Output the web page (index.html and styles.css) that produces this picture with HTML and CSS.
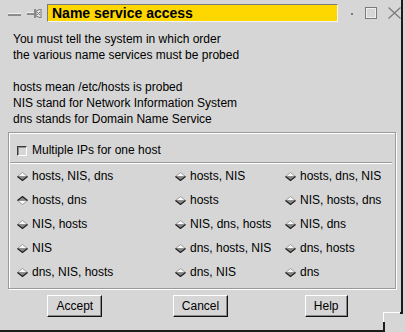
FILE: index.html
```html
<!DOCTYPE html>
<html lang="en">

<head>
  <meta charset="UTF-8">
  <title>Name service access</title>
  <link rel="stylesheet" href="styles.css">
</head>

<body>
  <svg class="defs" width="0" height="0">
    <symbol id="radio-off" viewBox="0 0 11 9">
      <path d="M0.5 4.5 L5.5 0.5 L10.5 4.5 Z" fill="#fafafa" stroke="#9a9a9a" stroke-width="1" stroke-linejoin="round" />
      <path d="M0.5 4.5 L5.5 8.5 L10.5 4.5 Z" fill="#8a8a8a" />
      <path d="M0.5 4.5 L5.5 8.5 L10.5 4.5" fill="none" stroke="#1e1e1e" stroke-width="1.2" />
    </symbol>
    <symbol id="radio-on" viewBox="0 0 11 9">
      <path d="M0.5 4.5 L5.5 8.5 L10.5 4.5 Z" fill="#fafafa" stroke="#9a9a9a" stroke-width="1" stroke-linejoin="round" />
      <path d="M0.5 4.5 L5.5 0.5 L10.5 4.5 Z" fill="#8a8a8a" />
      <path d="M0.5 4.5 L5.5 0.5 L10.5 4.5" fill="none" stroke="#1e1e1e" stroke-width="1.2" />
    </symbol>
  </svg>

  <div class="window">
    <div class="titlebar">
      <svg class="tb-min" width="13" height="3" viewBox="0 0 13 3">
        <rect x="0" y="0" width="13" height="1" fill="#f2f2f2" />
        <rect x="0" y="1" width="13" height="2" fill="#8c8c8c" />
      </svg>
      <svg class="tb-pin" width="15" height="9" viewBox="0 0 15 9">
        <rect x="0" y="3" width="7" height="1" fill="#f2f2f2" />
        <rect x="0" y="4" width="7" height="2" fill="#8c8c8c" />
        <rect x="7" y="0" width="2" height="9" fill="#8c8c8c" />
        <path d="M9 2 L14 0 L14 9 L9 7 Z" fill="#e6e6e6" stroke="#777" stroke-width="1" />
        <path d="M10 3 L13 6 M13 3 L10 6" stroke="#777" stroke-width="1" />
      </svg>
      <div class="title">Name service access</div>
      <span class="tb-dot"></span>
      <svg class="tb-max" width="12" height="12" viewBox="0 0 12 12">
        <rect x="0.5" y="0.5" width="11" height="11" fill="none" stroke="#7a7a7a" />
        <rect x="1.5" y="1.5" width="9" height="9" fill="none" stroke="#f0f0f0" />
      </svg>
      <svg class="tb-close" width="13" height="12" viewBox="0 0 13 12">
        <path d="M0.5 0.5 L12.5 11.5 M12.5 0.5 L0.5 11.5" stroke="#7a7a7a" stroke-width="1.2" />
      </svg>
    </div>

    <p class="intro">
      You must tell the system in which order<br>
      the various name services must be probed<br>
      <br>
      hosts mean /etc/hosts is probed<br>
      NIS stand for Network Information System<br>
      dns stands for Domain Name Service
    </p>

    <div class="frame">
      <div class="check-row">
        <span class="checkbox"></span>
        <span>Multiple IPs for one host</span>
      </div>
      <div class="separator"></div>
      <div class="choices">
        <div class="choice"><svg class="radio"><use href="#radio-off" /></svg>hosts, NIS, dns</div>
        <div class="choice"><svg class="radio"><use href="#radio-off" /></svg>hosts, NIS</div>
        <div class="choice"><svg class="radio"><use href="#radio-off" /></svg>hosts, dns, NIS</div>
        <div class="choice"><svg class="radio"><use href="#radio-on" /></svg>hosts, dns</div>
        <div class="choice"><svg class="radio"><use href="#radio-off" /></svg>hosts</div>
        <div class="choice"><svg class="radio"><use href="#radio-off" /></svg>NIS, hosts, dns</div>
        <div class="choice"><svg class="radio"><use href="#radio-off" /></svg>NIS, hosts</div>
        <div class="choice"><svg class="radio"><use href="#radio-off" /></svg>NIS, dns, hosts</div>
        <div class="choice"><svg class="radio"><use href="#radio-off" /></svg>NIS, dns</div>
        <div class="choice"><svg class="radio"><use href="#radio-off" /></svg>NIS</div>
        <div class="choice"><svg class="radio"><use href="#radio-off" /></svg>dns, hosts, NIS</div>
        <div class="choice"><svg class="radio"><use href="#radio-off" /></svg>dns, hosts</div>
        <div class="choice"><svg class="radio"><use href="#radio-off" /></svg>dns, NIS, hosts</div>
        <div class="choice"><svg class="radio"><use href="#radio-off" /></svg>dns, NIS</div>
        <div class="choice"><svg class="radio"><use href="#radio-off" /></svg>dns</div>
      </div>
    </div>

    <div class="buttons">
      <button class="btn">Accept</button>
      <button class="btn">Cancel</button>
      <button class="btn">Help</button>
    </div>

    <div class="corner"></div>
  </div>
</body>

</html>
```

FILE: styles.css
```css
body {
  margin: 0;
  background-color: #d6d6d6;
  font-family: "Liberation Sans", Arial, sans-serif;
  font-size: 12px;
  color: #000;
}

.defs {
  position: absolute;
  width: 0;
  height: 0;
}

.window {
  position: relative;
  width: 401px;
  height: 330px;
  border-right: 2px solid #1c1c1c;
  border-bottom: 2px solid #1c1c1c;
}

/* title bar */
.titlebar {
  display: flex;
  align-items: center;
  height: 18px;
  padding-top: 4px;
}

.tb-min {
  margin-left: 8px;
  margin-top: 2px;
}

.tb-pin {
  margin-left: 6px;
  margin-top: 1px;
}

.title {
  box-sizing: border-box;
  width: 291px;
  height: 18px;
  margin-left: 5px;
  padding-left: 4px;
  background-color: #ffd700;
  border: 1px solid;
  border-color: #7a7a7a #f4f4f4 #f4f4f4 #7a7a7a;
  font-size: 14px;
  font-weight: bold;
  line-height: 16px;
}

.tb-dot {
  width: 2px;
  height: 2px;
  margin-left: 13px;
  margin-top: 2px;
  background-color: #7a7a7a;
}

.tb-max {
  margin-left: 12px;
}

.tb-close {
  margin-left: 11px;
}

/* text */
.intro {
  margin: 9px 0 0;
  padding-left: 13px;
  line-height: 16px;
}

/* etched frame */
.frame {
  width: 378px;
  margin: 5px 0 0 8px;
  padding: 9px 0 4px 8px;
  border: 1px solid #9a9a9a;
  box-shadow: inset 1px 1px 0 #fff, 1px 1px 0 #fff;
}

.check-row {
  display: flex;
  align-items: center;
  line-height: 16px;
}

.checkbox {
  box-sizing: border-box;
  width: 10px;
  height: 10px;
  margin: 2px 5px 0 0;
  border: 1px solid;
  border-color: #3a3a3a #fff #fff #3a3a3a;
  box-shadow: inset 1px 1px 0 #8c8c8c;
}

.separator {
  height: 0;
  margin: 4px 3px 0 -7px;
  border-top: 1px solid #9a9a9a;
  border-bottom: 1px solid #fff;
}

.choices {
  display: grid;
  grid-template-columns: 158px 110px 1fr;
}

.choice {
  display: flex;
  align-items: center;
  height: 24px;
  line-height: 24px;
}

.radio {
  width: 11px;
  height: 9px;
  margin: 1px 4px 0 0;
}

/* buttons */
.buttons {
  display: grid;
  grid-template-columns: repeat(3, 1fr);
  justify-items: center;
  margin-top: 6px;
  padding: 0 12px;
}

.btn {
  height: 22px;
  padding: 0 8px;
  background-color: #d6d6d6;
  border: 1px solid;
  border-color: #fff #111 #111 #fff;
  box-shadow: inset -1px -1px 0 #8c8c8c;
  font-family: "Liberation Sans", Arial, sans-serif;
  font-size: 12px;
  line-height: 20px;
  color: #000;
}

/* resize grip in the window corner */
.corner {
  position: absolute;
  right: -2px;
  bottom: -2px;
  width: 20px;
  height: 20px;
  background-color: #d6d6d6;
  border-top: 1px solid #fff;
  border-left: 1px solid #fff;
  box-sizing: border-box;
}

.corner::before {
  content: "";
  position: absolute;
  right: 0;
  top: -1px;
  width: 3px;
  height: 2px;
  background-color: #1c1c1c;
}

.corner::after {
  content: "";
  position: absolute;
  left: -1px;
  bottom: 0;
  width: 2px;
  height: 10px;
  background-color: #1c1c1c;
}
```
